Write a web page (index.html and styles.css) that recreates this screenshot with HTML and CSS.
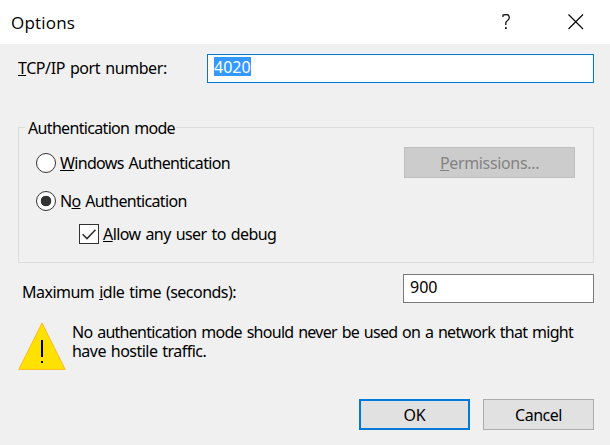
FILE: index.html
```html
<!DOCTYPE html>
<html lang="en">
<head>
<meta charset="utf-8">
<title>Options</title>
<link rel="stylesheet" href="styles.css">
</head>
<body>
<header class="titlebar">
  <h1 class="title">Options</h1>
  <svg class="help" width="9" height="16" viewBox="0 0 9 16"><path d="M1 3V1.2Q2.3.6 4.2.6Q7.3.6 7.3 3.6Q7.3 5.2 5.6 6.5Q3.8 7.8 3.8 9V11" fill="none" stroke="#111" stroke-width="1.3"/><rect x="3" y="13.2" width="1.8" height="1.8" fill="#111"/></svg>
  <svg class="close" width="16" height="16" viewBox="0 0 16 16"><path d="M.5.5L15 15M15 .5L.5 15" stroke="#000" stroke-width="1.1"/></svg>
</header>
<main class="content">
  <div class="row port-row">
    <label class="port-label"><u>T</u>CP/IP port number:</label>
    <div class="field focused"><span class="selected">4020</span></div>
  </div>
  <fieldset class="group">
    <legend class="legend">Authentication mode</legend>
    <div class="row windows-row">
      <span class="radio"></span>
      <span class="windows-label"><u>W</u>indows Authentication</span>
      <button class="button disabled" disabled><span><u>P</u>ermissions...</span></button>
    </div>
    <div class="row none-row">
      <span class="radio checked"></span>
      <span class="none-label">N<u>o</u> Authentication</span>
    </div>
    <div class="row allow-row">
      <svg class="checkbox" width="20" height="20" viewBox="0 0 20 20"><rect x=".5" y=".5" width="19" height="19" fill="#fff" stroke="#333"/><path d="M3.6 10.2L8 14.6L16.5 5.7" fill="none" stroke="#333" stroke-width="1.6"/></svg>
      <span class="allow-label"><u>A</u>llow any user to debug</span>
    </div>
  </fieldset>
  <div class="row idle-row">
    <label class="idle-label">Maximum <u>i</u>dle time (seconds):</label>
    <div class="field idle-field">900</div>
  </div>
  <div class="row warning">
    <svg class="warning-icon" width="48" height="48" viewBox="0 0 48 48"><path d="M24 1L47.2 47.4H.8Z" fill="#ffe100" stroke="#ffb91a"/><path d="M23 18h2v17h-2zM23 39h2v2h-2z" fill="#000"/></svg>
    <p class="message"><span class="line-one">No authentication mode should never be used on a network that might</span><br><span class="line-two">have hostile traffic.</span></p>
  </div>
  <footer class="actions">
    <button class="button default"><span class="ok">OK</span></button>
    <button class="button"><span class="cancel">Cancel</span></button>
  </footer>
</main>
</body>
</html>
```
FILE: styles.css
```css
* { box-sizing: border-box; }

body {
  margin: 0;
  width: 610px;
  height: 445px;
  overflow: hidden;
  background: #f0f0f0;
  color: #000;
  font: 16px/19px "Noto Sans", sans-serif;
  letter-spacing: -0.5px;
  word-spacing: 1.3px;
  white-space: nowrap;
}

u {
  text-decoration-thickness: 1px;
  text-underline-offset: 1px;
  text-decoration-skip-ink: none;
}

.titlebar {
  display: flex;
  align-items: flex-start;
  height: 44px;
  padding: 14px 26px 0 11px;
  background: #fff;
}

.title {
  flex: 1;
  margin: -2px 0 0;
  font: 17px/22px "Open Sans", sans-serif;
  letter-spacing: 0.2px;
}

.help { margin-right: 57px; }

.content { padding: 10px 16px 0 18px; }

.row { display: flex; align-items: flex-start; }

.port-label {
  width: 189px;
  padding-top: 5px;
  letter-spacing: -0.42px;
}

.field {
  flex: 1;
  height: 29px;
  padding: 3px 6px;
  border: 1px solid #7a7a7a;
  background: #fff;
  letter-spacing: 0;
}

.focused {
  padding-top: 2px;
  border-color: #0078d7;
}

.selected {
  display: inline-block;
  height: 19px;
  width: 37px;
  line-height: 21px;
  background: #3399ff;
  color: #fff;
}

.group {
  height: 145px;
  margin: 35px 0 0;
  padding: 10px 18px 0 17px;
  border: 1px solid #dcdcdc;
  min-width: 0;
}

.legend {
  height: 19px;
  width: 151px;
  margin-left: -11px;
  padding: 0 3px;
  line-height: 21px;
  letter-spacing: -0.67px;
}

.radio {
  width: 20px;
  height: 20px;
  margin-right: 4px;
  border: 1px solid #333;
  border-radius: 50%;
  background: #fff;
}

.windows-row { height: 38px; }

.windows-row .radio { margin-top: 6px; }

.checked { background: radial-gradient(circle, #333 5px, #fff 5.6px); }

.windows-label {
  flex: 1;
  margin-top: 7px;
  letter-spacing: -0.66px;
}

.none-row { padding-top: 6px; height: 39px; }

.none-label { margin-top: 1px; letter-spacing: -0.67px; }

.allow-row { padding-left: 43px; }

.checkbox { margin-right: 4px; }

.allow-label { margin-top: 1px; letter-spacing: -0.57px; }

.button {
  width: 111px;
  height: 31px;
  padding: 2px 0 0;
  border: 1px solid #adadad;
  background: #e1e1e1;
  color: #000;
  font: inherit;
  letter-spacing: -0.5px;
}

.disabled {
  width: 171px;
  border-color: #bfbfbf;
  background: #ccc;
  color: #838383;
  letter-spacing: -0.34px;
}

.default { border: 2px solid #0078d7; }

.ok { letter-spacing: -0.2px; }

.idle-row { margin-top: 11px; }

.idle-label {
  width: 385px;
  padding: 9px 0 0 4px;
  letter-spacing: -0.52px;
}

.warning { margin-top: 19px; }

.message { margin: 1px 0 0 6px; }

.line-one { letter-spacing: -0.72px; }

.line-two { letter-spacing: -0.53px; }

.actions {
  display: flex;
  justify-content: flex-end;
  gap: 13px;
  margin-top: 29px;
}
```
